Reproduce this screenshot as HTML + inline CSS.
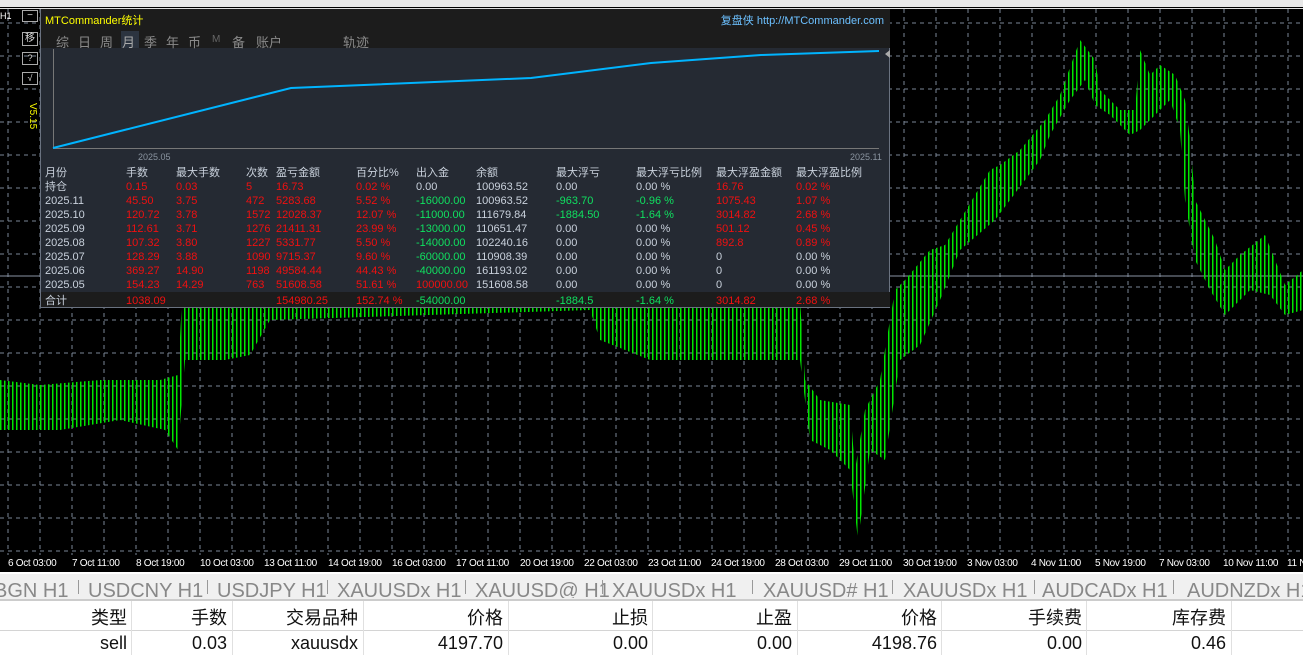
<!DOCTYPE html>
<html><head><meta charset="utf-8"><style>
*{margin:0;padding:0;box-sizing:border-box}
body{width:1303px;height:655px;overflow:hidden;background:#000;position:relative;font-family:"Liberation Sans","Noto Sans CJK SC",sans-serif}
.a{position:absolute;white-space:nowrap}
#panel{position:absolute;left:40px;top:9px;width:850px;height:299px;background:#252a33;border:1px solid #6a7280;border-top:none}
.t{position:absolute;font-size:11px;line-height:14px;color:#c9d1dc;white-space:nowrap}
.r{color:#f01010}.g{color:#10e060}
.tab{position:absolute;top:23px;font-size:13px;color:#8a8a8a;white-space:nowrap}
.tl{position:absolute;top:558px;font-size:10px;color:#fff;letter-spacing:-0.3px;white-space:nowrap}
.bt{position:absolute;top:579px;font-size:20px;color:#888;line-height:24px;height:19px;overflow:hidden;white-space:nowrap}
.dv{position:absolute;top:580px;width:1px;height:14px;background:#999}
.th,.td{position:absolute;font-size:18px;color:#111;text-align:right;white-space:nowrap}
</style></head><body>
<div class="a" style="left:0;top:0;width:1303px;height:7px;background:#e8e8e8"></div>
<div class="a" style="left:0;top:8px;width:1303px;height:1px;background:#ddd"></div>
<svg class="a" style="left:0;top:9px" width="1303" height="546">
<defs><pattern id="p" width="4" height="4" patternUnits="userSpaceOnUse"><rect width="1.5" height="4" fill="#00e600"/></pattern></defs>
<g stroke="#7a8696" stroke-dasharray="4,4" stroke-width="1">
<path d="M0 14H1303M0 47H1303M0 80H1303M0 113H1303M0 146H1303M0 179H1303M0 212H1303M0 245H1303M0 278H1303M0 311H1303M0 344H1303M0 377H1303M0 410H1303M0 443H1303M0 476H1303M0 509H1303M0 542H1303"/>
<path d="M8 0V546M40 0V546M72 0V546M104 0V546M136 0V546M168 0V546M200 0V546M232 0V546M264 0V546M296 0V546M328 0V546M360 0V546M392 0V546M424 0V546M456 0V546M488 0V546M520 0V546M552 0V546M584 0V546M616 0V546M648 0V546M680 0V546M712 0V546M744 0V546M776 0V546M808 0V546M840 0V546M872 0V546M904 0V546M936 0V546M968 0V546M1000 0V546M1032 0V546M1064 0V546M1096 0V546M1128 0V546M1160 0V546M1192 0V546M1224 0V546M1256 0V546M1288 0V546"/>
</g>
<path d="M0 267H1303" stroke="#8a94a4"/>
<g transform="translate(0,-9)">
<polygon fill="url(#p)" points="0,380 40,385 100,380 160,380 178,375 182,300 220,290 270,300 590,300 700,300 800,300 805,380 820,400 850,405 855,470 865,410 880,380 895,290 905,280 930,250 945,245 990,170 1000,165 1020,150 1045,120 1060,95 1080,40 1095,60 1100,90 1120,110 1135,110 1140,50 1150,75 1160,65 1175,75 1185,100 1190,140 1195,200 1205,220 1215,240 1225,270 1240,255 1265,235 1275,260 1285,285 1303,270 1303,310 1285,315 1270,295 1250,290 1240,300 1225,315 1210,290 1195,260 1185,200 1180,130 1170,100 1150,120 1140,130 1130,135 1110,115 1095,105 1085,80 1070,100 1050,135 1040,160 1010,200 995,220 960,250 940,300 920,345 900,360 885,460 870,450 858,540 850,470 830,450 810,440 800,360 760,360 700,360 650,360 600,340 590,310 270,320 250,355 225,360 185,360 178,450 165,430 120,420 60,430 0,430"/>
</g>
</svg>
<div class="a" style="left:0;top:11px;font-size:9px;color:#fff">H1</div>
<div class="a" style="left:22px;top:10px;width:16px;height:12px;border:1px solid #aaa;color:#ddd;font-size:10px;line-height:10px;text-align:center">−</div>
<div class="a" style="left:22px;top:32px;width:16px;height:14px;border:1px solid #aaa;color:#ddd;font-size:10px;line-height:12px;text-align:center">移</div>
<div class="a" style="left:22px;top:52px;width:16px;height:13px;border:1px solid #aaa;color:#ddd;font-size:9px;line-height:11px;text-align:center">?</div>
<div class="a" style="left:22px;top:72px;width:16px;height:13px;border:1px solid #aaa;color:#ddd;font-size:9px;line-height:11px;text-align:center">√</div>
<div class="a" style="font-size:10px;color:#ff0;transform:rotate(90deg);transform-origin:left top;left:38px;top:103px">V5.15</div>
<div id="panel">
<div class="a" style="left:0;top:0;width:849px;height:39px;background:#1c1c1c"></div>
<div class="a" style="left:4px;top:3px;font-size:11px;color:#ffff00">MTCommander统计</div>
<div class="a" style="right:5px;top:3px;font-size:11px;color:#6cc0ff">复盘侠 http://MTCommander.com</div>
<div class="a" style="left:80px;top:22px;width:18px;height:17px;background:#2c3440"></div>
<div class="tab" style="left:15px">综</div><div class="tab" style="left:37px">日</div><div class="tab" style="left:59px">周</div><div class="tab" style="left:81px;color:#aaa">月</div><div class="tab" style="left:103px">季</div><div class="tab" style="left:125px">年</div><div class="tab" style="left:147px">币</div><div class="tab" style="left:171px;font-size:10px;color:#666;top:25px">M</div><div class="tab" style="left:191px">备</div><div class="tab" style="left:215px">账户</div><div class="tab" style="left:302px">轨迹</div>
<svg class="a" style="left:0;top:39px" width="849" height="115">
<path d="M12.5 1V100.5H838" stroke="#777" fill="none"/>
<polyline points="12,100 250,40 490,30 610,15 720,7 838,3" stroke="#00b4ff" stroke-width="2" fill="none"/>
<path d="M849 2l-5 4 5 4z" fill="#aaa"/>
</svg>
<div class="t" style="left:97px;top:141px;font-size:9px;color:#8a94a0">2025.05</div>
<div class="t" style="left:809px;top:141px;font-size:9px;color:#8a94a0">2025.11</div>
<div class="a" style="left:0;top:283px;width:849px;height:15px;background:#1c1c1c"></div>
<div style="position:absolute;left:0;top:157px">
<div class="t" style="left:4px;top:0">月份<br>持仓<br>2025.11<br>2025.10<br>2025.09<br>2025.08<br>2025.07<br>2025.06<br>2025.05<br><span style="position:relative;top:2px">合计</span></div>
<div class="t" style="left:85px;top:0">手数<br><span class="r">0.15<br>45.50<br>120.72<br>112.61<br>107.32<br>128.29<br>369.27<br>154.23<br><span style="position:relative;top:2px">1038.09</span></span></div>
<div class="t r" style="left:135px;top:0"><span style="color:#c9d1dc">最大手数</span><br>0.03<br>3.75<br>3.78<br>3.71<br>3.80<br>3.88<br>14.90<br>14.29</div>
<div class="t r" style="left:205px;top:0"><span style="color:#c9d1dc">次数</span><br>5<br>472<br>1572<br>1276<br>1227<br>1090<br>1198<br>763</div>
<div class="t r" style="left:235px;top:0"><span style="color:#c9d1dc">盈亏金额</span><br>16.73<br>5283.68<br>12028.37<br>21411.31<br>5331.77<br>9715.37<br>49584.44<br>51608.58<br><span style="position:relative;top:2px">154980.25</span></div>
<div class="t r" style="left:315px;top:0"><span style="color:#c9d1dc">百分比%</span><br>0.02 %<br>5.52 %<br>12.07 %<br>23.99 %<br>5.50 %<br>9.60 %<br>44.43 %<br>51.61 %<br><span style="position:relative;top:2px">152.74 %</span></div>
<div class="t g" style="left:375px;top:0"><span style="color:#c9d1dc">出入金<br>0.00</span><br>-16000.00<br>-11000.00<br>-13000.00<br>-14000.00<br>-60000.00<br>-40000.00<br><span class="r">100000.00</span><br><span style="position:relative;top:2px">-54000.00</span></div>
<div class="t" style="left:435px;top:0">余额<br>100963.52<br>100963.52<br>111679.84<br>110651.47<br>102240.16<br>110908.39<br>161193.02<br>151608.58</div>
<div class="t" style="left:515px;top:0">最大浮亏<br>0.00<br><span class="g">-963.70<br>-1884.50</span><br>0.00<br>0.00<br>0.00<br>0.00<br>0.00<br><span class="g" style="position:relative;top:2px">-1884.5</span></div>
<div class="t" style="left:595px;top:0">最大浮亏比例<br>0.00 %<br><span class="g">-0.96 %<br>-1.64 %</span><br>0.00 %<br>0.00 %<br>0.00 %<br>0.00 %<br>0.00 %<br><span class="g" style="position:relative;top:2px">-1.64 %</span></div>
<div class="t" style="left:675px;top:0">最大浮盈金额<br><span class="r">16.76<br>1075.43<br>3014.82<br>501.12<br>892.8</span><br>0<br>0<br>0<br><span class="r" style="position:relative;top:2px">3014.82</span></div>
<div class="t" style="left:755px;top:0">最大浮盈比例<br><span class="r">0.02 %<br>1.07 %<br>2.68 %<br>0.45 %<br>0.89 %</span><br>0.00 %<br>0.00 %<br>0.00 %<br><span class="r" style="position:relative;top:2px">2.68 %</span></div>
</div>
</div>
<div class="tl" style="left:8px">6 Oct 03:00</div><div class="tl" style="left:72px">7 Oct 11:00</div><div class="tl" style="left:136px">8 Oct 19:00</div><div class="tl" style="left:200px">10 Oct 03:00</div><div class="tl" style="left:264px">13 Oct 11:00</div><div class="tl" style="left:328px">14 Oct 19:00</div><div class="tl" style="left:392px">16 Oct 03:00</div><div class="tl" style="left:456px">17 Oct 11:00</div><div class="tl" style="left:520px">20 Oct 19:00</div><div class="tl" style="left:584px">22 Oct 03:00</div><div class="tl" style="left:648px">23 Oct 11:00</div><div class="tl" style="left:711px">24 Oct 19:00</div><div class="tl" style="left:775px">28 Oct 03:00</div><div class="tl" style="left:839px">29 Oct 11:00</div><div class="tl" style="left:903px">30 Oct 19:00</div><div class="tl" style="left:967px">3 Nov 03:00</div><div class="tl" style="left:1031px">4 Nov 11:00</div><div class="tl" style="left:1095px">5 Nov 19:00</div><div class="tl" style="left:1159px">7 Nov 03:00</div><div class="tl" style="left:1223px">10 Nov 11:00</div><div class="tl" style="left:1287px">11 Nov</div>
<div class="a" style="left:0;top:572px;width:1303px;height:2px;background:#fff"></div>
<div class="a" style="left:0;top:574px;width:1303px;height:26px;background:#f0f0f0"></div>
<div class="bt" style="left:-6px">BGN H1</div><div class="dv" style="left:78px"></div>
<div class="bt" style="left:88px">USDCNY H1</div><div class="dv" style="left:207px"></div>
<div class="bt" style="left:217px">USDJPY H1</div><div class="dv" style="left:327px"></div>
<div class="bt" style="left:337px">XAUUSDx H1</div><div class="dv" style="left:465px"></div>
<div class="bt" style="left:475px">XAUUSD@ H1</div><div class="dv" style="left:602px"></div>
<div class="bt" style="left:612px">XAUUSDx H1</div><div class="dv" style="left:752px"></div>
<div class="bt" style="left:763px">XAUUSD# H1</div><div class="dv" style="left:892px"></div>
<div class="bt" style="left:903px">XAUUSDx H1</div><div class="dv" style="left:1034px"></div>
<div class="bt" style="left:1042px">AUDCADx H1</div><div class="dv" style="left:1173px"></div>
<div class="bt" style="left:1187px">AUDNZDx H1</div>
<div class="a" style="left:0;top:599px;width:1303px;height:2px;background:#ccc"></div>
<div class="a" style="left:0;top:601px;width:1303px;height:54px;background:#fff"></div>
<div class="a" style="left:0;top:630px;width:1303px;height:1px;background:#d4d4d4"></div>
<div class="a" style="left:131px;top:601px;width:1px;height:54px;background:#e0e0e0"></div><div class="a" style="left:232px;top:601px;width:1px;height:54px;background:#e0e0e0"></div><div class="a" style="left:363px;top:601px;width:1px;height:54px;background:#e0e0e0"></div><div class="a" style="left:508px;top:601px;width:1px;height:54px;background:#e0e0e0"></div><div class="a" style="left:652px;top:601px;width:1px;height:54px;background:#e0e0e0"></div><div class="a" style="left:797px;top:601px;width:1px;height:54px;background:#e0e0e0"></div><div class="a" style="left:941px;top:601px;width:1px;height:54px;background:#e0e0e0"></div><div class="a" style="left:1086px;top:601px;width:1px;height:54px;background:#e0e0e0"></div><div class="a" style="left:1231px;top:601px;width:1px;height:54px;background:#e0e0e0"></div>
<div class="th" style="left:0;width:127px;top:604px">类型</div><div class="th" style="left:132px;width:95px;top:604px">手数</div><div class="th" style="left:233px;width:125px;top:604px">交易品种</div><div class="th" style="left:364px;width:139px;top:604px">价格</div><div class="th" style="left:509px;width:139px;top:604px">止损</div><div class="th" style="left:653px;width:139px;top:604px">止盈</div><div class="th" style="left:798px;width:139px;top:604px">价格</div><div class="th" style="left:942px;width:140px;top:604px">手续费</div><div class="th" style="left:1087px;width:139px;top:604px">库存费</div>
<div class="td" style="left:0;width:127px;top:633px">sell</div><div class="td" style="left:132px;width:95px;top:633px">0.03</div><div class="td" style="left:233px;width:125px;top:633px">xauusdx</div><div class="td" style="left:364px;width:139px;top:633px">4197.70</div><div class="td" style="left:509px;width:139px;top:633px">0.00</div><div class="td" style="left:653px;width:139px;top:633px">0.00</div><div class="td" style="left:798px;width:139px;top:633px">4198.76</div><div class="td" style="left:942px;width:140px;top:633px">0.00</div><div class="td" style="left:1087px;width:139px;top:633px">0.46</div>
</body></html>
